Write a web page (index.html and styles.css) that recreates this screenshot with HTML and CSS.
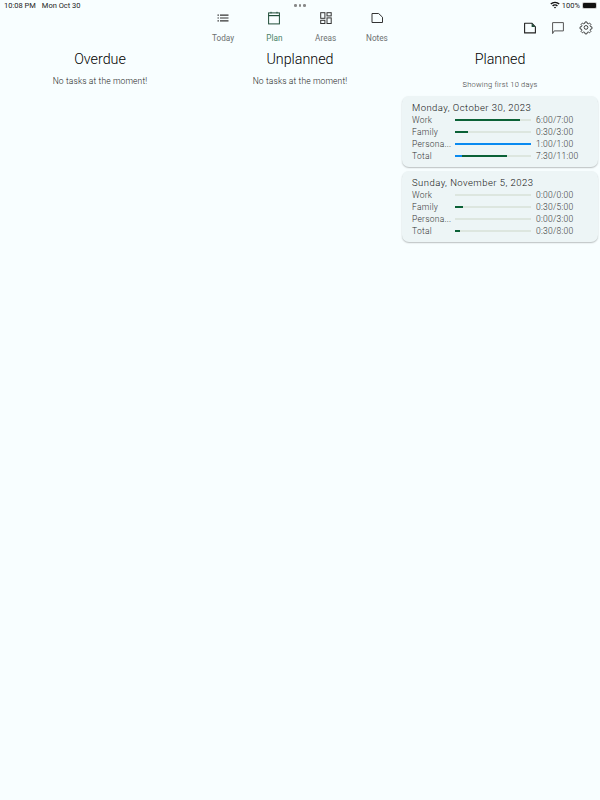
FILE: index.html
```html
<!DOCTYPE html>
<html lang="en">
<head>
    <meta charset="UTF-8">
    <meta name="viewport" content="width=device-width, initial-scale=1.0">
    <title>Plan</title>
    <link rel="stylesheet" href="styles.css">
</head>
<body>
    <div class="status-bar">
        <div class="status-time">
            <span>10:08 PM</span>
            <span>Mon Oct 30</span>
        </div>
        <div class="status-dots"><i></i><i></i><i></i></div>
        <div class="status-right">
            <svg class="wifi" width="10" height="8" viewBox="0 0 10 8">
                <path d="M0.3 2.6A6.6 6.6 0 0 1 9.7 2.6L8.7 3.6A5.2 5.2 0 0 0 1.3 3.6Z" fill="#111"/>
                <path d="M2.1 4.4A4 4 0 0 1 7.9 4.4L6.9 5.4A2.6 2.6 0 0 0 3.1 5.4Z" fill="#111"/>
                <path d="M3.9 6.2A1.6 1.6 0 0 1 6.1 6.2L5 7.4Z" fill="#111"/>
            </svg>
            <span>100%</span>
            <div class="battery"><div class="battery-fill"></div></div>
        </div>
    </div>

    <div class="top-bar">
        <nav class="tabs">
            <div class="tab">
                <svg class="tab-icon" width="14" height="14" viewBox="0 0 14 14">
                    <path d="M1.5 3.6h1.4v1.2H1.5zM1.5 6.4h1.4v1.2H1.5zM1.5 9.2h1.4v1.2H1.5zM4 3.6h8.5v1.2H4zM4 6.4h8.5v1.2H4zM4 9.2h8.5v1.2H4z" fill="#333"/>
                </svg>
                <span>Today</span>
            </div>
            <div class="tab active">
                <svg class="tab-icon" width="14" height="14" viewBox="0 0 14 14" fill="none">
                    <rect x="1.6" y="1.9" width="10.8" height="11" stroke="#1f4d38" stroke-width="1"/>
                    <path d="M1.6 4.6h10.8" stroke="#1f4d38" stroke-width="1.2"/>
                    <path d="M4 0.8v1.6M10 0.8v1.6" stroke="#1f4d38" stroke-width="1"/>
                </svg>
                <span>Plan</span>
            </div>
            <div class="tab">
                <svg class="tab-icon" width="14" height="14" viewBox="0 0 14 14" fill="none" stroke="#333" stroke-width="1">
                    <rect x="1.7" y="1.7" width="4.2" height="5.6"/>
                    <rect x="8" y="1.7" width="4.2" height="3.2"/>
                    <rect x="1.7" y="9.3" width="4.2" height="3.2"/>
                    <rect x="8" y="6.9" width="4.2" height="5.6"/>
                </svg>
                <span>Areas</span>
            </div>
            <div class="tab">
                <svg class="tab-icon" width="14" height="14" viewBox="0 0 14 14" fill="none">
                    <path d="M2 2.5H8.6L12.5 6.2V11.5H2Z" stroke="#333" stroke-width="1" stroke-linejoin="round"/>
                </svg>
                <span>Notes</span>
            </div>
        </nav>
        <div class="actions">
            <svg width="14" height="14" viewBox="0 0 14 14" fill="none">
                <path d="M1.6 2.2H8.8L12.4 5.8V11.9H1.6Z" stroke="#222" stroke-width="1.1" stroke-linejoin="round"/>
                <path d="M8.6 2.2L12.4 6H8.6Z" fill="#1f4d38"/>
            </svg>
            <svg width="14" height="14" viewBox="0 0 14 14" fill="none">
                <path d="M1.6 12.6V1.6H12.4V9.9H3.2L1.6 12.6Z" stroke="#555" stroke-width="1"/>
            </svg>
            <svg width="14" height="14" viewBox="0 0 24 24" fill="none" stroke="#222" stroke-width="1.7" stroke-linejoin="round">
                <g transform="translate(1.8 0.8) scale(.85)">
                    <path d="M10 2h4l.6 3 2 .8 2.5-1.7 2.8 2.8-1.7 2.5.8 2 3 .6v4l-3 .6-.8 2 1.7 2.5-2.8 2.8-2.5-1.7-2 .8-.6 3h-4l-.6-3-2-.8-2.5 1.7-2.8-2.8 1.7-2.5-.8-2-3-.6v-4l3-.6.8-2-1.7-2.5 2.8-2.8 2.5 1.7 2-.8z" transform="translate(0 -1)"/>
                    <circle cx="12" cy="12" r="3.8"/>
                </g>
            </svg>
        </div>
    </div>

    <main class="columns">
        <section class="column">
            <h2>Overdue</h2>
            <p class="empty">No tasks at the moment!</p>
        </section>
        <section class="column">
            <h2>Unplanned</h2>
            <p class="empty">No tasks at the moment!</p>
        </section>
        <section class="column">
            <h2>Planned</h2>
            <p class="showing">Showing first 10 days</p>

            <div class="day-card">
                <h3>Monday, October 30, 2023</h3>
                <div class="row">
                    <span class="row-name">Work</span>
                    <div class="bar"><div class="fill green" style="width: 86%"></div></div>
                    <span class="row-time">6:00/7:00</span>
                </div>
                <div class="row">
                    <span class="row-name">Family</span>
                    <div class="bar"><div class="fill green" style="width: 17%"></div></div>
                    <span class="row-time">0:30/3:00</span>
                </div>
                <div class="row">
                    <span class="row-name">Persona...</span>
                    <div class="bar"><div class="fill blue" style="width: 100%"></div></div>
                    <span class="row-time">1:00/1:00</span>
                </div>
                <div class="row">
                    <span class="row-name">Total</span>
                    <div class="bar">
                        <div class="fill blue" style="width: 9%"></div>
                        <div class="fill green" style="width: 59%"></div>
                    </div>
                    <span class="row-time">7:30/11:00</span>
                </div>
            </div>

            <div class="day-card">
                <h3>Sunday, November 5, 2023</h3>
                <div class="row">
                    <span class="row-name">Work</span>
                    <div class="bar"></div>
                    <span class="row-time">0:00/0:00</span>
                </div>
                <div class="row">
                    <span class="row-name">Family</span>
                    <div class="bar"><div class="fill green" style="width: 10%"></div></div>
                    <span class="row-time">0:30/5:00</span>
                </div>
                <div class="row">
                    <span class="row-name">Persona...</span>
                    <div class="bar"></div>
                    <span class="row-time">0:00/3:00</span>
                </div>
                <div class="row">
                    <span class="row-name">Total</span>
                    <div class="bar"><div class="fill green" style="width: 6%"></div></div>
                    <span class="row-time">0:30/8:00</span>
                </div>
            </div>
        </section>
    </main>
</body>
</html>
```

FILE: styles.css
```css
* {
    margin: 0;
    padding: 0;
    box-sizing: border-box;
    font-family: Roboto, "Liberation Sans", sans-serif;
    font-weight: 300;
}

body {
    background-color: #f8feff;
    width: 600px;
    height: 800px;
    overflow: hidden;
    color: #1a1c1c;
}

.status-bar {
    position: relative;
    display: flex;
    justify-content: space-between;
    align-items: center;
    height: 10px;
    padding: 0 3px 0 4px;
    font-size: 7.5px;
    color: #222;
}

.status-bar span {
    font-weight: 400;
}

.status-time {
    display: flex;
    gap: 6px;
}

.status-dots {
    position: absolute;
    left: 294px;
    top: 4px;
    display: flex;
    gap: 2px;
}

.status-dots i {
    width: 2.6px;
    height: 2.6px;
    border-radius: 50%;
    background-color: #888;
}

.status-right {
    display: flex;
    align-items: center;
    gap: 2px;
}

.battery {
    width: 15px;
    height: 7px;
    padding: 1px;
    border-radius: 2px;
    background-color: #ccc;
}

.battery-fill {
    width: 100%;
    height: 100%;
    border-radius: 1px;
    background-color: #111;
}

.top-bar {
    position: relative;
    height: 35px;
}

.tabs {
    display: flex;
    justify-content: center;
}

.tab {
    width: 51.3px;
    display: flex;
    flex-direction: column;
    align-items: center;
    padding-top: 1px;
}

.tab span {
    font-size: 8.2px;
    font-weight: 400;
    color: #6c7070;
}

.tab-icon {
    margin-bottom: 8px;
}

.tab.active span {
    color: #4a8268;
}

.actions {
    position: absolute;
    right: 7px;
    top: 11px;
    display: flex;
    gap: 14px;
}

.columns {
    display: flex;
    padding-top: 6px;
}

.column {
    width: 200px;
    display: flex;
    flex-direction: column;
    align-items: center;
}

.column h2 {
    font-size: 14.3px;
    font-weight: 300;
    line-height: 17px;
    color: #000;
    margin-bottom: 8px;
}

.empty {
    font-size: 8.5px;
    line-height: 11px;
    color: #222;
    letter-spacing: 0.12px;
}

.showing {
    font-size: 7.5px;
    line-height: 10px;
    margin-top: 4px;
    margin-bottom: 6px;
    color: #333;
    letter-spacing: 0.2px;
}

.day-card {
    width: 196px;
    height: 71px;
    margin-bottom: 4px;
    padding: 5px 10px 0;
    background-color: #edf5f6;
    border-radius: 7px;
    box-shadow: 0 1px 1.5px rgba(0, 0, 0, 0.25);
}

.day-card h3 {
    font-size: 9.5px;
    font-weight: 300;
    line-height: 13px;
    letter-spacing: 0.45px;
    color: #111;
}

.row {
    display: flex;
    align-items: center;
    height: 12px;
    font-size: 8.5px;
    color: #333;
}

.row span {
    letter-spacing: 0.25px;
}

.row-name {
    width: 43px;
    white-space: nowrap;
}

.bar {
    display: flex;
    width: 76px;
    height: 2.5px;
    background-color: #dde6df;
}

.fill {
    height: 100%;
}

.fill.green {
    background-color: #0b6136;
}

.fill.blue {
    background-color: #0a8af0;
}

.row-time {
    margin-left: 5px;
    white-space: nowrap;
}
```
